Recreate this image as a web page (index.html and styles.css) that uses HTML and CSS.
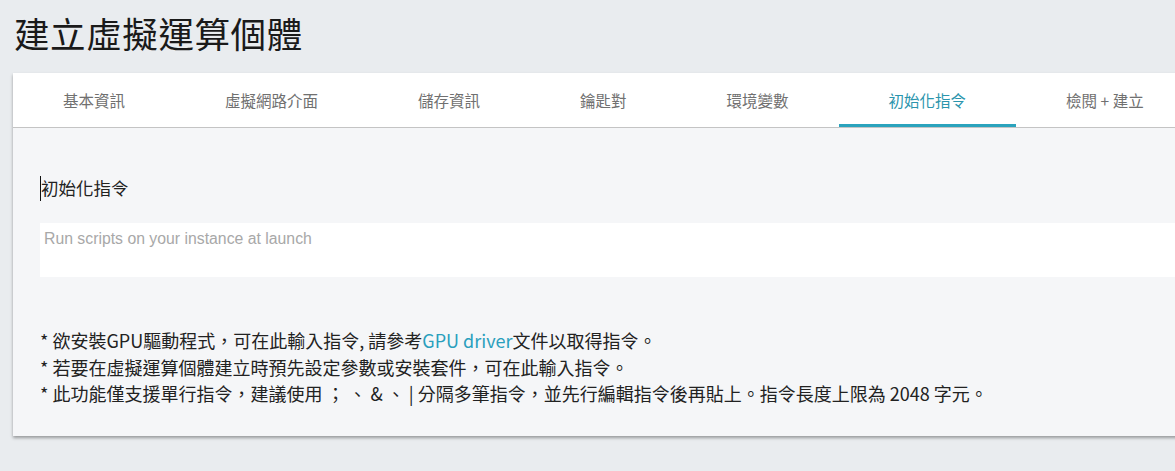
FILE: index.html
```html
<!DOCTYPE html>
<html lang="zh-Hant">
<head>
<meta charset="utf-8">
<title>建立虛擬運算個體</title>
<link rel="stylesheet" href="styles.css">
</head>
<body>
<div class="page">
  <h1 class="title">建立虛擬運算個體</h1>
  <div class="card">
    <nav class="tabs">
      <div class="tab">基本資訊</div>
      <div class="tab">虛擬網路介面</div>
      <div class="tab">儲存資訊</div>
      <div class="tab">鑰匙對</div>
      <div class="tab">環境變數</div>
      <div class="tab active">初始化指令</div>
      <div class="tab">檢閱 + 建立</div>
    </nav>
    <div class="body">
      <div class="label"><span class="caret"></span>初始化指令</div>
      <div class="input">Run scripts on your instance at launch</div>
      <div class="notes">
        <p>* 欲安裝GPU驅動程式，可在此輸入指令, 請參考<a class="link">GPU driver</a>文件以取得指令。</p>
        <p>* 若要在虛擬運算個體建立時預先設定參數或安裝套件，可在此輸入指令。</p>
        <p>* 此功能僅支援單行指令，建議使用 ； 、 &amp; 、 | 分隔多筆指令，並先行編輯指令後再貼上。指令長度上限為 2048 字元。</p>
      </div>
    </div>
  </div>
</div>
</body>
</html>
```
FILE: styles.css
```css
html, body {
  margin: 0;
  padding: 0;
  background: #e9ecef;
  overflow: hidden;
  height: 471px;
}
body {
  font-family: "Noto Sans CJK TC", "Noto Sans", sans-serif;
  color: #222;
}
.page {
  padding: 7px 0 0 13px;
}
.title {
  margin: 0 0 0 1px;
  font-size: 35.5px;
  font-weight: 400;
  line-height: 52px;
  color: #1a1a1a;
  height: 66px;
  letter-spacing: 0.6px;
}
.card {
  width: 1230px;
  background: #f5f6f8;
  box-shadow: 0 2px 3px rgba(0, 0, 0, 0.35);
}
.tabs {
  display: flex;
  background: #fff;
  height: 54px;
  border-bottom: 1px solid #c4c4c4;
}
.tab {
  padding: 0 50px;
  font-size: 15.5px;
  line-height: 54px;
  color: #707070;
  white-space: nowrap;
  box-sizing: border-box;
}
.tab.active {
  color: #2b95ad;
  border-bottom: 3px solid #2ba3bd;
  height: 54px;
}
.body {
  padding: 48px 0 29px 27px;
}
.label {
  display: flex;
  align-items: center;
  font-size: 17.5px;
  line-height: 24px;
  color: #222;
  height: 24px;
}
.caret {
  display: inline-block;
  width: 1px;
  height: 25px;
  background: #111;
}
.input {
  margin-top: 23px;
  height: 54px;
  background: #fff;
  box-sizing: border-box;
  padding: 6px 4px;
  font-family: "Liberation Sans", Arial, sans-serif;
  font-size: 15.8px;
  line-height: 20px;
  color: #a8a8a8;
}
.notes {
  margin-top: 50px;
  font-size: 18px;
  line-height: 26.5px;
  color: #222;
}
.notes p {
  margin: 0;
  white-space: nowrap;
}
.link {
  color: #2a9fbd;
}
```
